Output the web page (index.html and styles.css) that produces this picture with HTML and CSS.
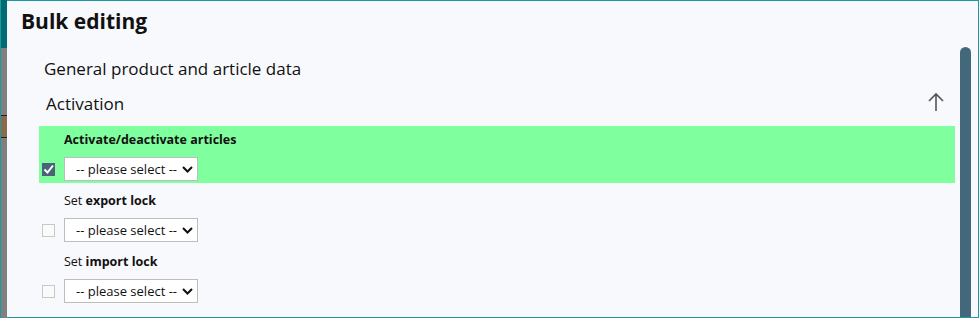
FILE: index.html
```html
<!DOCTYPE html>
<html lang="en">
<head>
    <meta charset="UTF-8">
    <title>Bulk editing</title>
    <link rel="stylesheet" href="styles.css">
</head>
<body>
    <div class="backdrop">
        <div class="backdrop-top"></div>
        <div class="backdrop-tag"></div>
    </div>

    <div class="dialog">
        <h2 class="dialog-title">Bulk editing</h2>

        <div class="dialog-body">
            <div class="content">
                <div class="group-title">General product and article data</div>

                <div class="section-head">
                    <span>Activation</span>
                    <svg class="collapse" width="16" height="20" viewBox="0 0 16 20">
                        <path d="M8 19V2M1 9l7-7 7 7" fill="none" stroke="#555" stroke-width="1.6"/>
                    </svg>
                </div>

                <div class="edit-row active">
                    <div class="row-label"><b>Activate/deactivate articles</b></div>
                    <span class="check checked">
                        <svg width="13" height="13" viewBox="0 0 13 13"><path d="M2.5 6.5l3 3 5.5-7" fill="none" stroke="#fff" stroke-width="2"/></svg>
                    </span>
                    <div class="select-wrap">
                        <select><option>-- please select --</option></select>
                        <svg class="chevron" width="11" height="7" viewBox="0 0 11 7"><path d="M1 1l4.5 4.5L10 1" fill="none" stroke="#111" stroke-width="2"/></svg>
                    </div>
                </div>

                <div class="edit-row">
                    <div class="row-label">Set <b>export lock</b></div>
                    <span class="check"></span>
                    <div class="select-wrap">
                        <select><option>-- please select --</option></select>
                        <svg class="chevron" width="11" height="7" viewBox="0 0 11 7"><path d="M1 1l4.5 4.5L10 1" fill="none" stroke="#111" stroke-width="2"/></svg>
                    </div>
                </div>

                <div class="edit-row">
                    <div class="row-label">Set <b>import lock</b></div>
                    <span class="check"></span>
                    <div class="select-wrap">
                        <select><option>-- please select --</option></select>
                        <svg class="chevron" width="11" height="7" viewBox="0 0 11 7"><path d="M1 1l4.5 4.5L10 1" fill="none" stroke="#111" stroke-width="2"/></svg>
                    </div>
                </div>
            </div>

            <div class="scrollbar"><div class="thumb"></div></div>
        </div>
    </div>
</body>
</html>
```

FILE: styles.css
```css
* {
    margin: 0;
    padding: 0;
    box-sizing: border-box;
}

body {
    font-family: 'Open Sans', 'Noto Sans', sans-serif;
    color: #111;
    display: flex;
    height: 318px;
    overflow: hidden;
    background: #fff;
}

.backdrop {
    width: 7px;
    background: #808080;
    border-left: 1px solid #1b9aa3;
    display: flex;
    flex-direction: column;
}

.backdrop-top {
    height: 48px;
    background: #006b72;
}

.backdrop-tag {
    margin-top: 67px;
    height: 23px;
    background: #8c6a4c;
    border-top: 1px solid #222;
    border-bottom: 1px solid #222;
}

.dialog {
    flex: 1;
    margin-right: 1px;
    background: #f8f9fc;
    border: 1px solid #1b9aa3;
    border-left: none;
    display: flex;
    flex-direction: column;
}

.dialog-title {
    font-size: 21px;
    font-weight: 700;
    line-height: 28px;
    padding: 6px 0 0 14px;
    height: 46px;
}

.dialog-body {
    flex: 1;
    display: flex;
    min-height: 0;
}

.content {
    flex: 1;
    padding: 10px 5px 0 32px;
}

.group-title {
    font-size: 17px;
    line-height: 24px;
    padding-left: 5px;
}

.section-head {
    display: flex;
    align-items: flex-start;
    justify-content: space-between;
    font-size: 17px;
    line-height: 24px;
    padding: 11px 11px 0 7px;
    height: 45px;
}

.edit-row {
    display: grid;
    grid-template-columns: 25px auto;
    align-items: center;
    padding: 4px 0 2px;
    height: 57px;
    margin-bottom: 4px;
}

.edit-row.active {
    background: #80ff9f;
}

.row-label {
    grid-column: 2;
    font-size: 12.5px;
    line-height: 20px;
    margin-bottom: 7px;
}

.check {
    width: 13px;
    height: 13px;
    margin-left: 3px;
    border: 1px solid #c8c8c8;
    background: #fafafa;
    display: flex;
}

.check.checked {
    border: none;
    background: #4b6378;
}

.select-wrap {
    position: relative;
    width: 134px;
}

select {
    appearance: none;
    width: 134px;
    height: 24px;
    border: 1px solid #bdbdbd;
    background: #fff;
    font-family: inherit;
    font-size: 13px;
    color: #111;
    padding: 0 0 0 11px;
}

.chevron {
    position: absolute;
    right: 5px;
    top: 9px;
    pointer-events: none;
}

.scrollbar {
    width: 18px;
    padding-right: 7px;
}

.thumb {
    width: 11px;
    height: 100%;
    background: #44687b;
    border-radius: 6px 6px 0 0;
}
```
